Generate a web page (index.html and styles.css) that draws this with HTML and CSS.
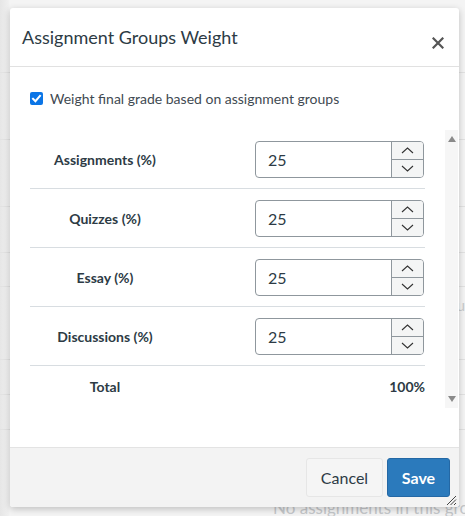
FILE: index.html
```html
<!DOCTYPE html>
<html lang="en">
<head>
<meta charset="utf-8">
<title>Assignment Groups Weight</title>
<link rel="stylesheet" href="styles.css">
</head>
<body>
<div class="page">
  <div class="bg-row r1"></div>
  <div class="bg-row r2"></div>
  <div class="bg-row r3"></div>
  <div class="bg-row r4"></div>
  <div class="bg-row r5"></div>
  <div class="bg-row r6"><span class="bg-tail">Grou</span></div>
  <div class="bg-row r7"></div>
  <div class="bg-row r8"></div>
  <div class="bg-empty">No assignments in this group</div>
</div>

<div class="dialog" role="dialog" aria-label="Assignment Groups Weight">
  <div class="dlg-header">
    <h2 class="dlg-title">Assignment Groups Weight</h2>
    <button class="close" aria-label="Close">
      <svg width="12" height="12" viewBox="0 0 12 12"><path d="M1.5 1.5 L10.5 10.5 M10.5 1.5 L1.5 10.5" stroke="#555" stroke-width="2.2" stroke-linecap="square" fill="none"/></svg>
    </button>
  </div>
  <div class="dlg-body">
    <label class="check-row">
      <span class="checkbox"><svg width="13" height="13" viewBox="0 0 13 13"><path d="M3 6.8 L5.4 9.2 L10 3.8" stroke="#fff" stroke-width="2" fill="none" stroke-linecap="square"/></svg></span>
      <span>Weight final grade based on assignment groups</span>
    </label>
    <div class="scroll">
      <div class="table">
        <div class="row">
          <div class="name">Assignments (%)</div>
          <div class="val"><div class="num"><span class="num-text">25</span><span class="spin"><span class="up"><svg width="13" height="7" viewBox="0 0 13 7"><path d="M1 6 L6.5 1 L12 6" stroke="#333" stroke-width="1.1" fill="none"/></svg></span><span class="down"><svg width="13" height="7" viewBox="0 0 13 7"><path d="M1 1 L6.5 6 L12 1" stroke="#333" stroke-width="1.1" fill="none"/></svg></span></span></div></div>
        </div>
        <div class="row">
          <div class="name">Quizzes (%)</div>
          <div class="val"><div class="num"><span class="num-text">25</span><span class="spin"><span class="up"><svg width="13" height="7" viewBox="0 0 13 7"><path d="M1 6 L6.5 1 L12 6" stroke="#333" stroke-width="1.1" fill="none"/></svg></span><span class="down"><svg width="13" height="7" viewBox="0 0 13 7"><path d="M1 1 L6.5 6 L12 1" stroke="#333" stroke-width="1.1" fill="none"/></svg></span></span></div></div>
        </div>
        <div class="row">
          <div class="name">Essay (%)</div>
          <div class="val"><div class="num"><span class="num-text">25</span><span class="spin"><span class="up"><svg width="13" height="7" viewBox="0 0 13 7"><path d="M1 6 L6.5 1 L12 6" stroke="#333" stroke-width="1.1" fill="none"/></svg></span><span class="down"><svg width="13" height="7" viewBox="0 0 13 7"><path d="M1 1 L6.5 6 L12 1" stroke="#333" stroke-width="1.1" fill="none"/></svg></span></span></div></div>
        </div>
        <div class="row">
          <div class="name">Discussions (%)</div>
          <div class="val"><div class="num"><span class="num-text">25</span><span class="spin"><span class="up"><svg width="13" height="7" viewBox="0 0 13 7"><path d="M1 6 L6.5 1 L12 6" stroke="#333" stroke-width="1.1" fill="none"/></svg></span><span class="down"><svg width="13" height="7" viewBox="0 0 13 7"><path d="M1 1 L6.5 6 L12 1" stroke="#333" stroke-width="1.1" fill="none"/></svg></span></span></div></div>
        </div>
        <div class="row total">
          <div class="name">Total</div>
          <div class="val">100%</div>
        </div>
      </div>
      <div class="scrollbar">
        <span class="arr arr-up"></span>
        <span class="arr arr-down"></span>
      </div>
    </div>
  </div>
  <div class="dlg-footer">
    <button class="btn btn-cancel">Cancel</button>
    <button class="btn btn-save">Save</button>
    <svg class="grip" width="11" height="11" viewBox="0 0 11 11"><path d="M1 10 L10 1 M4.5 10 L10 4.5 M8 10 L10 8" stroke="#444" stroke-width="1" fill="none"/></svg>
  </div>
</div>
</body>
</html>
```

FILE: styles.css
```css
* { box-sizing: border-box; }
html, body { margin: 0; padding: 0; }
body {
  width: 465px;
  height: 516px;
  overflow: hidden;
  background: #f4f4f4;
  font-family: Lato, "Open Sans", "Liberation Sans", sans-serif;
  color: #2d3b45;
  position: relative;
}

.page {
  position: relative;
  width: 465px;
  height: 516px;
  display: flex;
  flex-direction: column;
  background: linear-gradient(to right, #e6e6e6 0, #efefef 8px, #f4f4f4 10px);
}
.bg-row { border-bottom: 1px solid #e2e2e2; position: relative; }
.r1 { height: 73px; }
.r2 { height: 67px; }
.r3 { height: 67px; }
.r4 { height: 46px; }
.r5 { height: 34px; }
.r6 { height: 73px; }
.r7 { height: 35px; }
.r8 { height: 35px; }
.bg-tail {
  position: absolute;
  left: 430px;
  top: 8px;
  font-size: 16px;
  color: #c9ccce;
}
.bg-empty {
  position: absolute;
  left: 273px;
  top: 497px;
  font-size: 17px;
  color: #c4c7ca;
  white-space: nowrap;
}

.dialog {
  position: absolute;
  left: 10px;
  top: 8px;
  width: 449px;
  height: 499px;
  background: #fff;
  border-radius: 3px;
  box-shadow: 0 2px 7px rgba(0,0,0,0.22);
  display: flex;
  flex-direction: column;
  overflow: hidden;
}

.dlg-header {
  height: 59px;
  border-bottom: 1px solid #e1e1e1;
  display: flex;
  align-items: flex-start;
  justify-content: space-between;
  padding: 0 15px 0 12px;
  flex: none;
}
.dlg-title {
  margin: 0;
  padding-top: 17px;
  font-size: 18px;
  font-weight: 400;
  color: #2d3b45;
  line-height: 24px;
}
.close {
  margin-top: 29px;
  border: 0;
  background: none;
  padding: 0;
  width: 12px;
  height: 12px;
  display: flex;
}

.dlg-body {
  flex: 1;
  display: flex;
  flex-direction: column;
  padding: 20px 1px 0 20px;
}
.check-row {
  display: flex;
  align-items: center;
  gap: 7px;
  height: 23px;
  font-size: 14px;
  color: #3f4a52;
  margin-bottom: 20px;
}
.checkbox {
  width: 13px;
  height: 13px;
  background: #0b75e6;
  border-radius: 2px;
  display: flex;
}

.scroll {
  display: flex;
  height: 278px;
}
.table {
  width: 395px;
  flex: none;
}
.row {
  display: flex;
  align-items: center;
  height: 59px;
  border-bottom: 1px solid #d8dde1;
}
.name {
  width: 150px;
  text-align: center;
  font-size: 14px;
  font-weight: 700;
  color: #2d3b45;
}
.val {
  flex: 1;
  display: flex;
  justify-content: flex-end;
  padding-right: 1px;
}
.num {
  width: 169px;
  height: 37px;
  border: 1px solid #8f979d;
  border-radius: 4px;
  display: flex;
  overflow: hidden;
}
.num-text {
  flex: 1;
  font-size: 16px;
  padding-left: 12px;
  display: flex;
  align-items: center;
  color: #2d3b45;
}
.spin {
  width: 32px;
  border-left: 1px solid #8f979d;
  background: #f4f5f5;
  display: flex;
  flex-direction: column;
}
.up, .down {
  flex: 1;
  display: flex;
  align-items: center;
  justify-content: center;
}
.up { border-bottom: 1px solid #8f979d; }
.total { border-bottom: 0; height: 40px; }
.total .val { font-size: 14px; font-weight: 700; padding-right: 0; }

.scrollbar {
  width: 13px;
  margin-left: 20px;
  background: #f6f6f6;
  display: flex;
  flex-direction: column;
  justify-content: space-between;
  align-items: center;
  padding: 6px 0 6px;
  margin-top: 0;
}
.arr {
  width: 0;
  height: 0;
  border-left: 4px solid transparent;
  border-right: 4px solid transparent;
}
.arr-up { border-bottom: 6px solid #8a8a8a; }
.arr-down { border-top: 6px solid #8a8a8a; }

.dlg-footer {
  height: 60px;
  flex: none;
  background: #f3f3f3;
  border-top: 1px solid #e3e3e3;
  display: flex;
  align-items: center;
  justify-content: flex-end;
  gap: 4px;
  padding-right: 9px;
  position: relative;
}
.btn {
  height: 39px;
  font-family: inherit;
  font-size: 16px;
  border-radius: 3px;
  padding: 0;
}
.btn-cancel {
  width: 77px;
  background: #f5f5f5;
  border: 1px solid #e6e6e6;
  color: #2d3b45;
}
.btn-save {
  width: 63px;
  background: #2b7abc;
  border: 1px solid #2468a5;
  color: #fff;
  font-weight: 700;
}
.grip {
  position: absolute;
  right: 2px;
  bottom: 1px;
}
```
